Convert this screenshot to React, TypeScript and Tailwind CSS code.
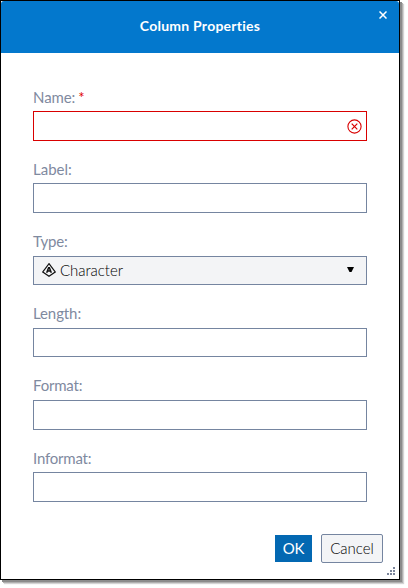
import React from 'react';

type FieldProps = {
  label: string;
  labelClass: string;
  boxClass: string;
  required?: boolean;
  children?: React.ReactNode;
};

function Field({ label, labelClass, boxClass, required, children }: FieldProps) {
  return (
    <div className="flex flex-col">
      <label className={`flex items-start text-[15px] leading-7 text-[#7f8a9f] ${labelClass}`}>
        <span>{label}</span>
        {required && <span className="ml-[3px] text-[15px] text-[#e00000]">*</span>}
      </label>
      <div className={`flex items-center border ${boxClass}`}>{children}</div>
    </div>
  );
}

function ErrorIcon() {
  return (
    <svg className="ml-auto mr-[4px]" width="15" height="15" viewBox="0 0 15 15" fill="none" stroke="#d90000">
      <circle cx="7.5" cy="7.5" r="6.6" strokeWidth="1.1" />
      <path d="M4.7 4.7l5.6 5.6M10.3 4.7l-5.6 5.6" strokeWidth="1.2" />
    </svg>
  );
}

function CharacterIcon() {
  return (
    <svg className="-mt-px ml-2" width="14" height="14" viewBox="0 0 14 14" fill="none" stroke="#111">
      <path d="M7 .7L13.2 9L7 13.2L.8 9Z" strokeWidth="1.2" />
      <path d="M4.7 9.8L6.6 4.8H7.4L9.3 9.8M5.4 8.1H8.6" strokeWidth="1.5" />
    </svg>
  );
}

export default function App() {
  return (
    <div className="h-[588px] w-[408px] overflow-hidden bg-white font-[Lato,sans-serif]">
      <div className="flex h-[580px] w-[400px] flex-col border border-black bg-white shadow-[2px_2px_0_#8b8b8b,3px_3px_0_#b0b0b0,4px_4px_1px_#d4d4d4]">
        <header className="relative flex h-[52px] shrink-0 items-center justify-center rounded-t-[3px] bg-[#0378cd]">
          <h1 className="-mt-0.5 text-[14px] font-bold leading-5 tracking-[0.24px] text-white">Column Properties</h1>
          <button aria-label="Close" className="absolute right-3 top-[10px]">
            <svg width="8" height="8" viewBox="0 0 8 8" stroke="#fff" strokeWidth="1.5" fill="none">
              <path d="M.5 .5L7.5 7.5M7.5 .5L.5 7.5" />
            </svg>
          </button>
        </header>
        <main className="flex flex-col px-8 pt-[30px]">
          <Field label="Name:" labelClass="h-7 tracking-[-0.1px]" boxClass="h-[30px] border-[#d90000]" required>
            <ErrorIcon />
          </Field>
          <div className="h-3.5" />
          <Field label="Label:" labelClass="h-7" boxClass="h-[30px] border-[#7585a0]" />
          <div className="h-3.5" />
          <Field label="Type:" labelClass="h-[29px] tracking-[-0.15px]" boxClass="h-[29px] border-[#7585a0] bg-[#f3f4f6]">
            <CharacterIcon />
            <span className="-mt-0.5 ml-1 text-[15px] font-light leading-5 tracking-[-0.05px] text-black">Character</span>
            <svg className="-mt-0.5 ml-auto mr-3" width="7" height="5" viewBox="0 0 7 5">
              <path d="M0 0H7L4.5 5H2.5Z" fill="#000" />
            </svg>
          </Field>
          <div className="h-3.5" />
          <Field label="Length:" labelClass="h-[29px] tracking-[-0.1px]" boxClass="h-[29px] border-[#7585a0]" />
          <div className="h-3.5" />
          <Field label="Format:" labelClass="h-[29px] tracking-[-0.2px]" boxClass="h-[30px] border-[#7585a0]" />
          <div className="h-3.5" />
          <Field label="Informat:" labelClass="h-7 tracking-[-0.2px]" boxClass="h-[30px] border-[#7585a0]" />
        </main>
        <footer className="relative flex flex-1 items-start justify-end pr-4 pt-8">
          <button className="mr-[9px] mt-px h-[27px] w-[37px] bg-[#0368b2] text-[15px] leading-[27px] tracking-[-0.3px] text-white">OK</button>
          <button className="h-[29px] w-[62px] rounded-[2px] border border-[#7585a0] bg-[#f3f4f6] text-[15px] font-light leading-[27px] text-black">Cancel</button>
          <svg className="absolute bottom-1 right-1" width="8" height="8" viewBox="0 0 8 8" fill="#7b859b">
            <path d="M6 0h2v2H6zM3 3h2v2H3zM6 3h2v2H6zM0 6h2v2H0zM3 6h2v2H3zM6 6h2v2H6z" />
          </svg>
        </footer>
      </div>
    </div>
  );
}
